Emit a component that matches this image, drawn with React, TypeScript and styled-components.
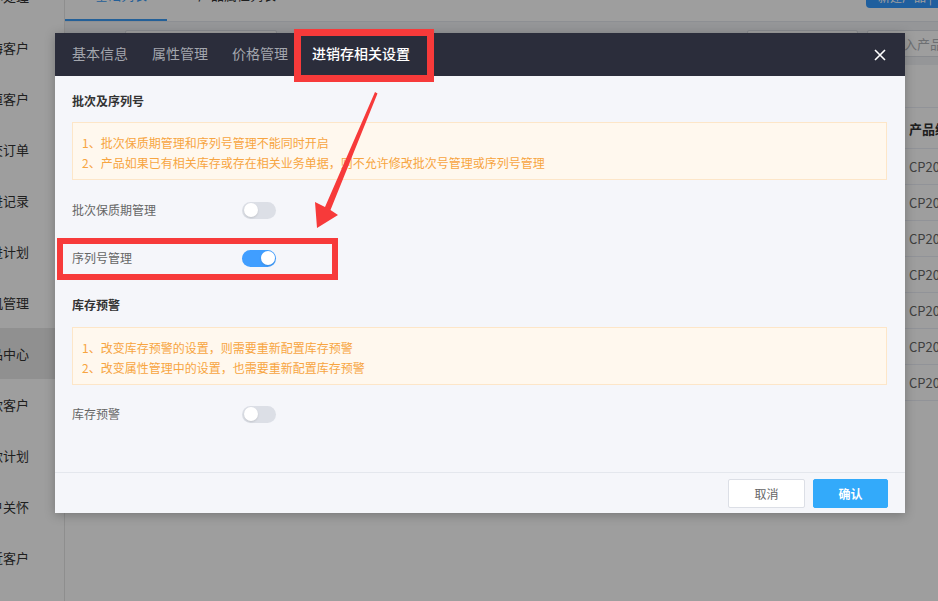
import React from "react";
import styled, { createGlobalStyle } from "styled-components";

const GlobalStyle = createGlobalStyle`
  html, body {
    margin: 0;
    padding: 0;
  }
  body {
    width: 938px;
    height: 601px;
    overflow: hidden;
    background: #fff;
    font-family: "Noto Sans CJK SC", "Noto Sans", sans-serif;
  }
  * {
    box-sizing: border-box;
  }
`;

const Page = styled.div`
  position: relative;
  display: flex;
  width: 938px;
  height: 601px;
  overflow: hidden;
`;

const Sidebar = styled.aside`
  width: 65px;
  flex-shrink: 0;
  background: #fff;
  border-right: 1px solid #e6e6e6;
  margin-top: -29px;
`;

const SideItem = styled.div<{ $active?: boolean }>`
  height: 51px;
  display: flex;
  align-items: center;
  justify-content: flex-end;
  padding-right: 35px;
  overflow: hidden;
  white-space: nowrap;
  font-size: 13px;
  color: #333;
  background: ${(p) => (p.$active ? "#e8e8e8" : "transparent")};
`;

const Main = styled.main`
  flex: 1;
  display: flex;
  flex-direction: column;
  overflow: hidden;
  background: #f0f2f5;
`;

const TopBar = styled.div`
  height: 52px;
  margin-top: -30px;
  display: flex;
  align-items: stretch;
  background: #fff;
  border-bottom: 1px solid #e4e7ed;
`;

const PageTab = styled.div<{ $active?: boolean }>`
  width: ${(p) => (p.$active ? "102px" : "130px")};
  display: flex;
  align-items: center;
  justify-content: center;
  font-size: 13px;
  color: ${(p) => (p.$active ? "#3b9cf5" : "#333")};
  border-bottom: 2px solid ${(p) => (p.$active ? "#3b9cf5" : "transparent")};
`;

const NewButton = styled.div`
  margin-left: auto;
  align-self: flex-start;
  margin-top: 14px;
  width: 72px;
  height: 24px;
  border-radius: 0 0 0 4px;
  background: #3399ff;
  color: #fff;
  font-size: 12px;
  display: flex;
  align-items: center;
  padding-left: 12px;
`;

const Filters = styled.div`
  height: 43px;
  display: flex;
  align-items: flex-start;
  padding: 8px 0 0 60px;
`;

const FilterInput = styled.div<{ $w: number; $ml: number }>`
  flex-shrink: 0;
  width: ${(p) => p.$w}px;
  margin-left: ${(p) => p.$ml}px;
  height: 27px;
  background: #fff;
  border: 1px solid #dcdfe6;
  border-radius: 2px;
  font-size: 13px;
  line-height: 25px;
  padding-left: 10px;
  color: #b0b3b9;
  white-space: nowrap;
  overflow: hidden;
`;

const TableCard = styled.section`
  flex: 1;
  background: #fff;
  padding-top: 42px;
`;

const TableRow = styled.div<{ $head?: boolean }>`
  display: grid;
  grid-template-columns: 843px 1fr;
  height: ${(p) => (p.$head ? "42px" : "36px")};
  align-items: center;
  border-bottom: 1px solid #ebeef5;
  border-top: ${(p) => (p.$head ? "1px solid #ebeef5" : "none")};
  font-size: 13px;
  font-weight: ${(p) => (p.$head ? 700 : 400)};
  color: ${(p) => (p.$head ? "#333" : "#666")};
  white-space: nowrap;
`;

const Cell = styled.div`
  padding-left: 1px;
  overflow: hidden;
`;

const Mask = styled.div`
  position: absolute;
  inset: 0;
  background: rgba(0, 0, 0, 0.38);
`;

const Modal = styled.div`
  position: absolute;
  left: 55px;
  top: 33px;
  width: 850px;
  height: 480px;
  display: flex;
  flex-direction: column;
  background: #f5f6fa;
  box-shadow: 0 2px 10px rgba(0, 0, 0, 0.25);
`;

const ModalHeader = styled.header`
  height: 43px;
  flex-shrink: 0;
  display: flex;
  align-items: center;
  gap: 24px;
  padding: 0 19px 3px 17px;
  background: #2b2d3b;
`;

const HeaderTab = styled.div<{ $active?: boolean }>`
  font-size: 14px;
  line-height: 20px;
  color: ${(p) => (p.$active ? "#fff" : "#a4a7ae")};
  font-weight: ${(p) => (p.$active ? 500 : 400)};
`;

const CloseButton = styled.button`
  margin-left: auto;
  margin-top: 3px;
  width: 12px;
  height: 12px;
  padding: 0;
  border: none;
  background: transparent;
  display: flex;
  cursor: pointer;
`;

const ModalBody = styled.div`
  flex: 1;
  padding: 15px 18px 0 17px;
`;

const SectionTitle = styled.div<{ $mt?: number }>`
  margin-top: ${(p) => p.$mt ?? 0}px;
  font-size: 12px;
  line-height: 20px;
  font-weight: 700;
  color: #333;
`;

const Notice = styled.div<{ $mt: number }>`
  margin-top: ${(p) => p.$mt}px;
  height: 58px;
  padding: 10px 9px 6px;
  background: #fff8ee;
  border: 1px solid #fde6c8;
  font-size: 12px;
  line-height: 20px;
  color: #f7a541;
`;

const SwitchRow = styled.div<{ $mt?: number }>`
  margin-top: ${(p) => p.$mt ?? 0}px;
  height: 48px;
  display: flex;
  align-items: center;
`;

const SwitchLabel = styled.span`
  width: 170px;
  font-size: 12px;
  line-height: 16px;
  padding-bottom: 1px;
  color: #666;
`;

const Switch = styled.span<{ $on?: boolean }>`
  position: relative;
  width: 34px;
  height: 17px;
  border-radius: 9px;
  background: ${(p) => (p.$on ? "#409eff" : "#dcdfe6")};
  &::after {
    content: "";
    position: absolute;
    top: 1.5px;
    left: ${(p) => (p.$on ? "18.5px" : "1.5px")};
    width: 14px;
    height: 14px;
    border-radius: 50%;
    background: #fff;
    box-shadow: 0 1px 2px rgba(0, 0, 0, 0.12);
  }
`;

const ModalFooter = styled.footer`
  height: 41px;
  flex-shrink: 0;
  display: flex;
  justify-content: flex-end;
  gap: 8px;
  padding: 6px 17px 0;
  border-top: 1px solid #e4e7ed;
`;

const FooterButton = styled.button<{ $primary?: boolean }>`
  width: ${(p) => (p.$primary ? "75px" : "77px")};
  height: 29px;
  padding: 0;
  border-radius: 2px;
  font-family: inherit;
  font-size: 12px;
  font-weight: ${(p) => (p.$primary ? 700 : 400)};
  color: ${(p) => (p.$primary ? "#fff" : "#666")};
  background: ${(p) => (p.$primary ? "#33aafa" : "#fff")};
  border: 1px solid ${(p) => (p.$primary ? "#33aafa" : "#dcdfe6")};
`;

const Highlight = styled.div<{ $x: number; $y: number; $w: number; $h: number; $b: number }>`
  position: absolute;
  left: ${(p) => p.$x}px;
  top: ${(p) => p.$y}px;
  width: ${(p) => p.$w}px;
  height: ${(p) => p.$h}px;
  border: ${(p) => p.$b}px solid #f73a3a;
  pointer-events: none;
`;

const ArrowLayer = styled.svg`
  position: absolute;
  left: 0;
  top: 0;
  pointer-events: none;
`;

const sideItems = [
  "待办处理",
  "公海客户",
  "永恒客户",
  "成交订单",
  "跟进记录",
  "跟进计划",
  "商机管理",
  "产品中心",
  "欠款客户",
  "回款计划",
  "客户关怀",
  "附近客户",
];

export default function App() {
  return (
    <>
      <GlobalStyle />
      <Page>
        <Sidebar>
          {sideItems.map((s) => (
            <SideItem key={s} $active={s === "产品中心"}>
              {s}
            </SideItem>
          ))}
        </Sidebar>
        <Main>
          <TopBar>
            <PageTab $active>+ 基础列表</PageTab>
            <PageTab>+ 产品属性列表</PageTab>
            <NewButton>新建产品 |</NewButton>
          </TopBar>
          <Filters>
            <FilterInput $w={152} $ml={0}>请选择产品分类</FilterInput>
            <FilterInput $w={111} $ml={470}>请选择状态</FilterInput>
            <FilterInput $w={130} $ml={9}>请输入产品编号</FilterInput>
          </Filters>
          <TableCard>
            <TableRow $head>
              <Cell>产品名称</Cell>
              <Cell>产品编号</Cell>
            </TableRow>
            {[1, 2, 3, 4, 5, 6, 7].map((i) => (
              <TableRow key={i}>
                <Cell />
                <Cell>CP2021000{i}</Cell>
              </TableRow>
            ))}
          </TableCard>
        </Main>

        <Mask />

        <Modal>
          <ModalHeader>
            <HeaderTab>基本信息</HeaderTab>
            <HeaderTab>属性管理</HeaderTab>
            <HeaderTab>价格管理</HeaderTab>
            <HeaderTab $active>进销存相关设置</HeaderTab>
            <CloseButton aria-label="关闭">
              <svg width="12" height="12" viewBox="0 0 12 12">
                <path d="M1 1 L11 11 M11 1 L1 11" stroke="#fff" strokeWidth="1.6" />
              </svg>
            </CloseButton>
          </ModalHeader>
          <ModalBody>
            <SectionTitle>批次及序列号</SectionTitle>
            <Notice $mt={11}>
              <div>1、批次保质期管理和序列号管理不能同时开启</div>
              <div>2、产品如果已有相关库存或存在相关业务单据，则不允许修改批次号管理或序列号管理</div>
            </Notice>
            <SwitchRow $mt={6}>
              <SwitchLabel>批次保质期管理</SwitchLabel>
              <Switch />
            </SwitchRow>
            <SwitchRow>
              <SwitchLabel>序列号管理</SwitchLabel>
              <Switch $on />
            </SwitchRow>
            <SectionTitle $mt={13}>库存预警</SectionTitle>
            <Notice $mt={12}>
              <div>1、改变库存预警的设置，则需要重新配置库存预警</div>
              <div>2、改变属性管理中的设置，也需要重新配置库存预警</div>
            </Notice>
            <SwitchRow $mt={5}>
              <SwitchLabel>库存预警</SwitchLabel>
              <Switch />
            </SwitchRow>
          </ModalBody>
          <ModalFooter>
            <FooterButton>取消</FooterButton>
            <FooterButton $primary>确认</FooterButton>
          </ModalFooter>
        </Modal>

        <Highlight $x={294} $y={29} $w={140} $h={53} $b={7} />
        <Highlight $x={57} $y={238} $w={281} $h={42} $b={6} />
        <ArrowLayer width="938" height="601" viewBox="0 0 938 601">
          <polygon
            points="375,92 377.5,93.5 330.5,210 338,215 317,228 315,202 325,207"
            fill="#f73a3a"
          />
        </ArrowLayer>
      </Page>
    </>
  );
}
